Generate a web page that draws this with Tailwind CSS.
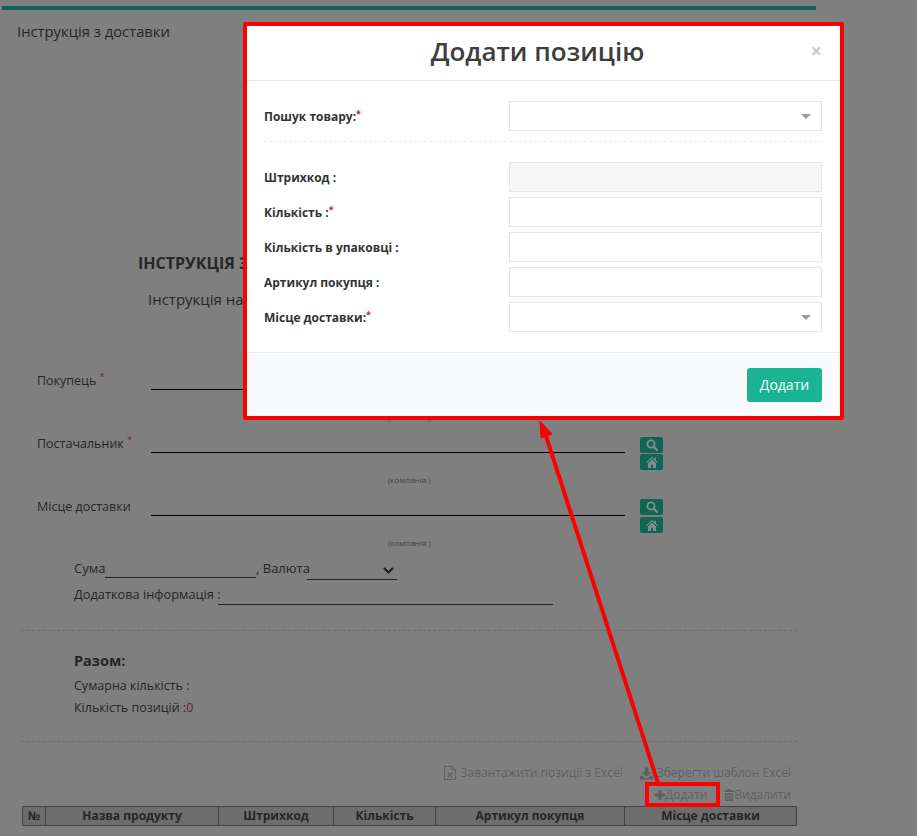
<!DOCTYPE html>
<html lang="uk">
<head>
  <meta charset="UTF-8" />
  <title>Інструкція з доставки</title>
  <script src="https://cdn.jsdelivr.net/npm/@tailwindcss/browser@4"></script>
</head>
<body class="relative h-[836px] overflow-hidden bg-[#7f7f7f] font-['Open_Sans',sans-serif] text-[13px] text-[#262626]">
  <div class="ml-[2px] w-[814px] pt-[6px]">
    <div class="h-[4px] bg-[#0f6654]"></div>
    <div class="mt-[11px] ml-[15px] text-[14.8px] leading-[20px] font-medium">Інструкція з доставки</div>
    <div class="mt-[210px] ml-[136px] text-[16px] leading-[24px] font-bold whitespace-nowrap">ІНСТРУКЦІЯ З ДОСТАВКИ</div>
    <div class="mt-[12px] ml-[146px] text-[15px] leading-[24px] font-medium whitespace-nowrap">Інструкція на відвантаження</div>

    <div class="mt-[63px] ml-[35px] text-[12.5px]">
      <div class="h-[63px]">
        <div class="flex h-[33px] items-start">
          <div class="w-[114px] leading-[13px] font-medium">Покупець <sup class="text-[#6e2234]">*</sup></div>
          <div class="h-[16px] w-[474px] border-b border-black"></div>
        </div>
        <div class="mt-[4px] ml-[351px] text-[8px] leading-[12px] text-[#444]">(компанія )</div>
      </div>
      <div class="h-[63px]">
        <div class="flex h-[33px] items-start">
          <div class="w-[114px] leading-[13px] font-medium">Постачальник <sup class="text-[#6e2234]">*</sup></div>
          <div class="h-[16px] w-[474px] border-b border-black"></div>
          <div class="ml-[15px] flex flex-col gap-[1px]">
            <div class="flex h-[16px] w-[23px] items-center justify-center rounded-[2px] bg-[#0f6654]">
              <svg class="h-[12px] w-[12px]" viewBox="0 0 12 12" fill="none" stroke="#7f8f8a" stroke-width="1.8"><circle cx="5" cy="5" r="3.6"/><path d="M7.7 7.7 11 11" stroke-linecap="round" stroke-width="2.2"/></svg>
            </div>
            <div class="flex h-[16px] w-[23px] items-center justify-center rounded-[2px] bg-[#0f6654]">
              <svg class="h-[11px] w-[12px]" viewBox="0 0 12 11" fill="#7f8f8a"><path d="M6 0 0 5.2l.7.8L6 1.5 11.300 6l.7-.8L10 3.500V.7H8.500v1.500ZM2 6.300V11h3V7.800h2V11h3V6.300L6 2.800Z"/></svg>
            </div>
          </div>
        </div>
        <div class="mt-[4px] ml-[351px] text-[8px] leading-[12px] text-[#444]">(компанія )</div>
      </div>
      <div class="h-[49px]">
        <div class="flex h-[33px] items-start">
          <div class="w-[114px] leading-[13px] font-medium">Місце доставки</div>
          <div class="h-[16px] w-[474px] border-b border-black"></div>
          <div class="-mt-[1px] ml-[15px] flex flex-col gap-[2px]">
            <div class="flex h-[16px] w-[23px] items-center justify-center rounded-[2px] bg-[#0f6654]">
              <svg class="h-[12px] w-[12px]" viewBox="0 0 12 12" fill="none" stroke="#7f8f8a" stroke-width="1.8"><circle cx="5" cy="5" r="3.6"/><path d="M7.7 7.7 11 11" stroke-linecap="round" stroke-width="2.2"/></svg>
            </div>
            <div class="flex h-[16px] w-[23px] items-center justify-center rounded-[2px] bg-[#0f6654]">
              <svg class="h-[11px] w-[12px]" viewBox="0 0 12 11" fill="#7f8f8a"><path d="M6 0 0 5.2l.7.8L6 1.5 11.300 6l.7-.8L10 3.500V.7H8.500v1.500ZM2 6.300V11h3V7.800h2V11h3V6.300L6 2.800Z"/></svg>
            </div>
          </div>
        </div>
        <div class="mt-[4px] ml-[351px] text-[8px] leading-[12px] text-[#444]">(компанія )</div>
      </div>
    </div>

    <div class="mt-[10px] ml-[72px] flex h-[21px] items-start leading-[18px] font-medium">
      <span class="w-[31px]">Сума</span>
      <div class="h-[19px] w-[151px] border-b border-[#222]"></div>
      <span class="w-[51px] whitespace-nowrap">, Валюта</span>
      <div class="flex h-[21px] w-[90px] items-start justify-end border-b border-[#222] pt-[8px] pr-[3px]">
        <svg class="h-[7px] w-[11px]" viewBox="0 0 11 7" fill="none" stroke="#1e1e1e" stroke-width="2"><path d="M1 1l4.500 4.500L10 1"/></svg>
      </div>
    </div>
    <div class="mt-[5px] ml-[72px] flex h-[20px] items-start text-[12.8px] leading-[18px] font-medium">
      <span class="w-[144px] whitespace-nowrap">Додаткова інформація :</span>
      <div class="h-[20px] w-[335px] border-b border-[#222]"></div>
    </div>

    <div class="mt-[25px] ml-[20px] w-[775px] border-b border-dashed border-[#6e6e6e]"></div>

    <div class="mt-[20px] ml-[72px] text-[14.5px] leading-[20px] font-bold">Разом:</div>
    <div class="mt-[5px] ml-[72px] text-[12.5px] leading-[20px] font-medium">Сумарна кількість :</div>
    <div class="mt-[2px] ml-[72px] text-[12.5px] leading-[20px] font-medium">Кількість позицій :<span class="text-[#5a2a30]">0</span></div>

    <div class="mt-[23px] ml-[20px] w-[775px] border-b border-dashed border-[#6e6e6e]"></div>

    <div class="mt-[21px] ml-[20px] flex h-[20px] w-[769px] items-center justify-end text-[12px] leading-[20px] text-[#5f5f5f]">
      <svg class="mr-[5px] h-[14px] w-[12px]" viewBox="0 0 12 14" fill="none" stroke="#5f5f5f"><path d="M.5.500H8L11.500 4v9.500H.5Z"/><path d="M8 .5V4h3.500"/><path d="M3.500 6.500l5 5M8.500 6.500l-5 5" stroke-width="1.300"/></svg>
      <span>Завантажити позиції з Excel</span>
      <svg class="mr-[4px] ml-[17px] h-[13px] w-[13px]" viewBox="0 0 14 13" fill="#5f5f5f"><path d="M5 0h4v5h3L7 10 2 5h3ZM0 9h3l2 2.500h4L11 9h3v4H0Z"/></svg>
      <span>Зберегти шаблон Excel</span>
    </div>
    <div class="mt-[2px] ml-[20px] flex h-[20px] w-[769px] items-center justify-end text-[12px] leading-[20px] text-[#5f5f5f]">
      <svg class="h-[10px] w-[10px]" viewBox="0 0 10 10" fill="#5f5f5f"><path d="M3.500 0h3v3.500H10v3H6.500V10h-3V6.500H0v-3h3.500Z"/></svg>
      <span>Додати</span>
      <svg class="ml-[17px] h-[12px] w-[10px]" viewBox="0 0 10 12" fill="#5f5f5f"><path d="M3.500 0h3L7 1.500h3V3H0V1.500h3ZM1 4h8v8H1Zm1.500 1v6h1V5Zm2 0v6h1V5Zm2 0v6h1V5Z"/></svg>
      <span>Видалити</span>
    </div>

    <table class="mt-[1px] ml-[20px] w-[775px] table-fixed border-collapse border border-[#444] bg-[#6d6d6d] text-[12px] leading-[18px] font-bold">
      <thead>
        <tr class="h-[19px]">
          <th class="w-[23px] border border-[#444] p-0 font-bold">№</th>
          <th class="w-[173px] border border-[#444] p-0 font-bold">Назва продукту</th>
          <th class="w-[115px] border border-[#444] p-0 font-bold">Штрихкод</th>
          <th class="w-[102px] border border-[#444] p-0 font-bold">Кількість</th>
          <th class="w-[189px] border border-[#444] p-0 font-bold">Артикул покупця</th>
          <th class="border border-[#444] p-0 font-bold">Місце доставки</th>
        </tr>
      </thead>
    </table>
  </div>

  <!-- modal -->
  <div class="absolute top-[22px] left-[243px] w-[601px] rounded-[2px] border-4 border-[#ff0000] bg-white text-[12px] text-[#333]">
    <div class="relative flex h-[55px] items-start justify-center border-b border-[#e7eaec] pt-[7px] pr-[12px]">
      <h2 class="text-[26px] leading-[36px] font-semibold text-[#3d3d3d]">Додати позицію</h2>
      <span class="absolute top-[14px] right-[18px] text-[20px] leading-[22px] font-bold text-[#c8c8c8]">×</span>
    </div>
    <div class="pt-[20px] pr-[18px] pl-[17px]">
      <div class="flex h-[30px] items-center justify-between">
        <label class="pt-[2px] font-bold">Пошук товару:<sup class="text-[#d0103a]">*</sup></label>
        <div class="flex h-[30px] w-[313px] items-center justify-end border border-[#e5e6e7] pr-[10px]">
          <div class="h-0 w-0 border-x-[5px] border-t-[5px] border-x-transparent border-t-[#999]"></div>
        </div>
      </div>
      <div class="mt-[10px] border-b border-dashed border-[#e7eaec]"></div>
      <div class="mt-[20px] flex flex-col gap-[5px]">
        <div class="flex h-[30px] items-center justify-between">
          <label class="pt-[2px] font-bold">Штрихкод :</label>
          <input disabled class="h-[30px] w-[313px] border border-[#e5e6e7] bg-[#f7f7f7]" />
        </div>
        <div class="flex h-[30px] items-center justify-between">
          <label class="pt-[2px] font-bold">Кількість :<sup class="text-[#d0103a]">*</sup></label>
          <input class="h-[30px] w-[313px] border border-[#e5e6e7]" />
        </div>
        <div class="flex h-[30px] items-center justify-between">
          <label class="pt-[2px] font-bold">Кількість в упаковці :</label>
          <input class="h-[30px] w-[313px] border border-[#e5e6e7]" />
        </div>
        <div class="flex h-[30px] items-center justify-between">
          <label class="pt-[2px] font-bold">Артикул покупця :</label>
          <input class="h-[30px] w-[313px] border border-[#e5e6e7]" />
        </div>
        <div class="flex h-[30px] items-center justify-between">
          <label class="pt-[2px] font-bold">Місце доставки:<sup class="text-[#d0103a]">*</sup></label>
          <div class="flex h-[30px] w-[313px] items-center justify-end border border-[#e5e6e7] pr-[10px]">
            <div class="h-0 w-0 border-x-[5px] border-t-[5px] border-x-transparent border-t-[#999]"></div>
          </div>
        </div>
      </div>
    </div>
    <div class="mt-[20px] flex h-[64px] items-center justify-end border-t border-[#e7eaec] bg-[#f8fafb] px-[18px]">
      <button class="h-[34px] w-[75px] rounded-[3px] bg-[#1ab394] text-[14px] text-white">Додати</button>
    </div>
  </div>

  <!-- annotation over the screenshot -->
  <div class="absolute top-[782px] left-[645px] h-[25px] w-[75px] border-4 border-[#ff0000]"></div>
  <svg class="absolute top-0 left-0 h-[836px] w-[917px]" viewBox="0 0 917 836" fill="none">
    <path d="M658 783 546 436" stroke="#ff0000" stroke-width="4"/>
    <path d="M540 421 552 434 541 438Z" fill="#ff0000" stroke="#ff0000" stroke-width="1"/>
  </svg>
</body>
</html>
